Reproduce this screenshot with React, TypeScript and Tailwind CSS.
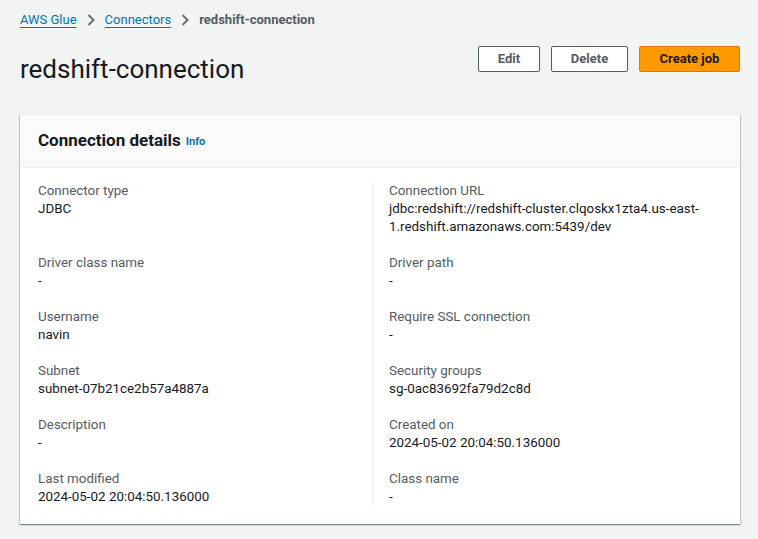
import React from 'react';

// Detail rows: [left field, right field]
const rows: { label: string; value: string }[][] = [
  [
    { label: 'Connector type', value: 'JDBC' },
    { label: 'Connection URL', value: 'jdbc:redshift://redshift-cluster.clqoskx1zta4.us-east-1.redshift.amazonaws.com:5439/dev' },
  ],
  [
    { label: 'Driver class name', value: '-' },
    { label: 'Driver path', value: '-' },
  ],
  [
    { label: 'Username', value: 'navin' },
    { label: 'Require SSL connection', value: '-' },
  ],
  [
    { label: 'Subnet', value: 'subnet-07b21ce2b57a4887a' },
    { label: 'Security groups', value: 'sg-0ac83692fa79d2c8d' },
  ],
  [
    { label: 'Description', value: '-' },
    { label: 'Created on', value: '2024-05-02 20:04:50.136000' },
  ],
  [
    { label: 'Last modified', value: '2024-05-02 20:04:50.136000' },
    { label: 'Class name', value: '-' },
  ],
];

const Chevron = () => (
  <svg width="16" height="16" viewBox="0 0 16 16" className="mx-[6px]" fill="none">
    <path d="M5.5 3l5 5-5 5" stroke="#687078" strokeWidth="2" />
  </svg>
);

const Field = ({ label, value }: { label: string; value: string }) => (
  <>
    <div className="text-[13.4px] leading-[18px] text-[#545b64]">{label}</div>
    <div className="text-[13.4px] leading-[18px] text-[#16191f]">{value}</div>
  </>
);

export default function App() {
  return (
    <div
      className="min-h-screen bg-[#f2f3f3] pl-5 pr-[18px] pt-[11px] pb-4"
      style={{ fontFamily: 'Roboto, "Liberation Sans", sans-serif' }}
    >
      {/* Breadcrumbs */}
      <nav className="flex items-center text-[13px] leading-[18px]">
        <a className="text-[#0073bb] underline underline-offset-[3px]">AWS Glue</a>
        <Chevron />
        <a className="text-[#0073bb] underline underline-offset-[3px]">Connectors</a>
        <Chevron />
        <span className="font-bold text-[#545b64]">redshift-connection</span>
      </nav>

      {/* Header */}
      <div className="mt-[17px] flex items-start justify-between">
        <h1 className="mt-[8px] text-[26px] leading-[30px] text-[#16191f]">redshift-connection</h1>
        <div className="flex gap-[11px]">
          <button className="h-[26px] w-[62px] rounded-[2px] border border-[#545b64] bg-white text-[13px] font-bold text-[#545b64]">
            Edit
          </button>
          <button className="h-[26px] w-[77px] rounded-[2px] border border-[#545b64] bg-white text-[13px] font-bold text-[#545b64]">
            Delete
          </button>
          <button className="h-[26px] w-[101px] rounded-[2px] border border-[#ec7211] bg-[#ff9900] text-[13px] font-bold text-[#16191f]">
            Create job
          </button>
        </div>
      </div>

      {/* Card */}
      <div className="mt-[30px] border-t border-[#eaeded] bg-white shadow-[0_1px_1px_0_rgba(0,28,36,0.3),1px_1px_1px_0_rgba(0,28,36,0.15),-1px_1px_1px_0_rgba(0,28,36,0.15)]">
        <div className="flex h-[53px] items-center border-b border-[#eaeded] bg-[#fafafa] px-[18px]">
          <h2 className="text-[17px] font-bold text-[#16191f]">Connection details</h2>
          <a className="ml-[5px] mt-[3px] text-[11px] font-bold text-[#0073bb]">Info</a>
        </div>
        <div className="grid grid-cols-[352px_1fr] pt-[14px] pb-[18px]">
          {rows.map(([left, right], i) => {
            const last = i === rows.length - 1;
            return (
              <React.Fragment key={left.label}>
                <div className={`pl-[18px] pr-[20px] ${last ? '' : 'pb-[18px]'}`}>
                  <Field {...left} />
                </div>
                <div className={`border-l border-[#eaeded] pl-[16px] pr-[18px] ${last ? '' : 'pb-[18px]'}`}>
                  <Field {...right} />
                </div>
              </React.Fragment>
            );
          })}
        </div>
      </div>
    </div>
  );
}
